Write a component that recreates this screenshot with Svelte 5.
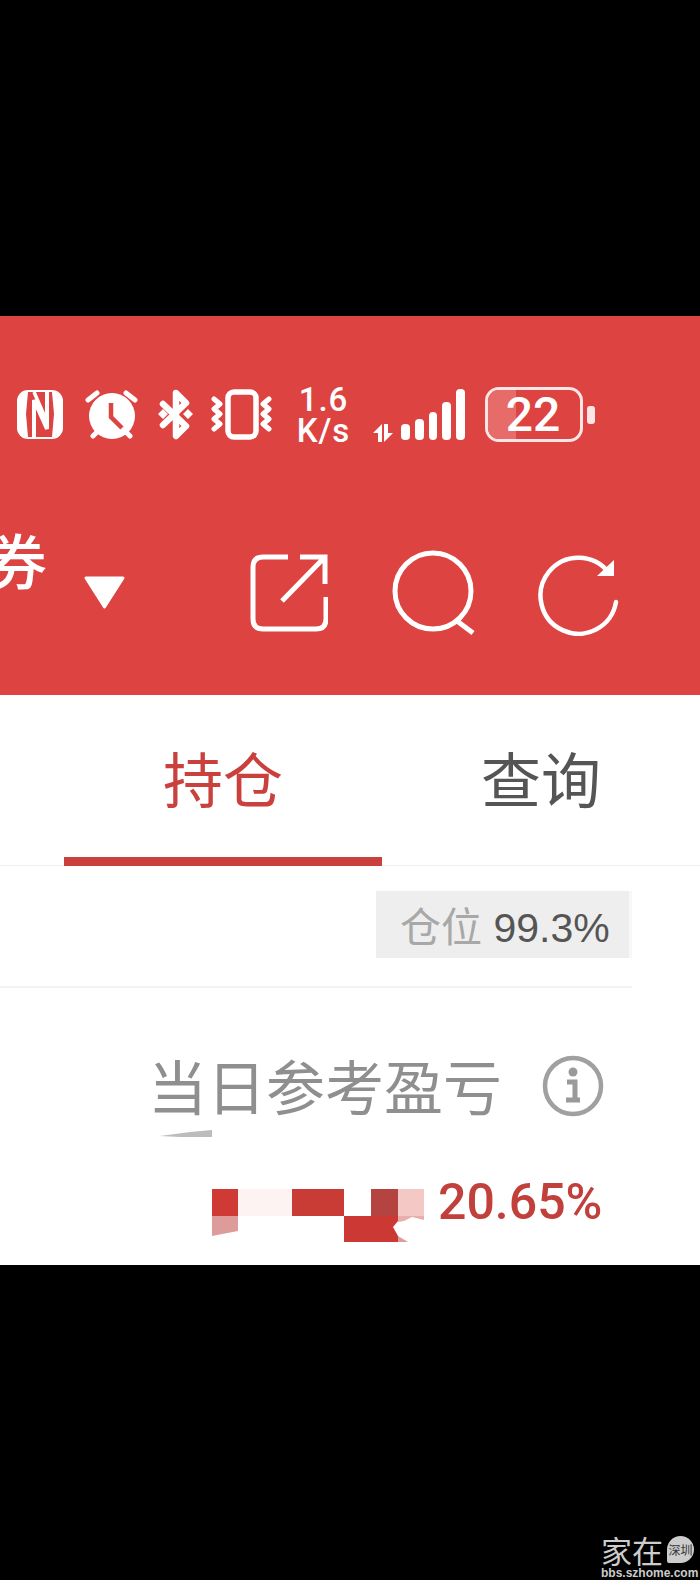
<script>
	const tabs = [
		{ label: '持仓', active: true },
		{ label: '查询', active: false }
	];
	const bars = [16, 21, 28, 38, 51];
	const patch = [
		{ x: 0, w: 26, fill: '#cf3a35' },
		{ x: 26, w: 54, fill: '#fdf3f2' },
		{ x: 80, w: 52, fill: '#c93c36' },
		{ x: 159, w: 27, fill: '#b54340' },
		{ x: 186, w: 26, fill: '#f3c8c5' }
	];
</script>

<div class="shot">
	<header>
		<div class="status">
			<svg class="nfc" width="46" height="49" viewBox="0 0 46 49">
				<rect width="46" height="49" rx="11" fill="#fff" />
				<path d="M11 2h24l2 22-2 23H11L9 24z" fill="#dd4341" />
				<path d="M17 47V10l13 29V2" fill="none" stroke="#fff" stroke-width="4" />
				<path d="M17 2l13 30" fill="none" stroke="#fff" stroke-width="3.500" />
			</svg>
			<svg class="alarm" width="53" height="51" viewBox="0 0 53 51">
				<path d="M3 11L12 4M50 11L41 4M8 47l5-5M45 47l-5-5" fill="none" stroke="#fff" stroke-width="5" stroke-linecap="round" />
				<circle cx="27" cy="27" r="23" fill="#fff" />
				<path d="M26 14v14l11 11" fill="none" stroke="#dd4341" stroke-width="4.500" />
			</svg>
			<svg class="bt" width="35" height="51" viewBox="0 0 35 51">
				<path d="M5 15l23 22-10 10V4l10 10L5 36" fill="none" stroke="#fff" stroke-width="6.500" stroke-linejoin="round" stroke-linecap="round" />
				<path d="M0 25l5-5 5 5-5 5zM25 25l5-5 5 5-5 5z" fill="#fff" />
			</svg>
			<svg class="vibrate" width="63" height="51" viewBox="0 0 63 51">
				<rect x="18" y="3" width="28" height="45" rx="6" fill="none" stroke="#fff" stroke-width="5.500" />
				<path d="M4 10l6 5-6 5 6 5-6 5 6 5-6 5M59 10l-6 5 6 5-6 5 6 5-6 5 6 5" fill="none" stroke="#fff" stroke-width="5" stroke-linejoin="round" stroke-linecap="round" />
			</svg>
			<div class="speed"><span>1.6</span><span>K/s</span></div>
			<svg class="arrows" width="20" height="18" viewBox="0 0 20 18">
				<path d="M9 0L0 9h5v9h4zM11 0h4v9h5l-9 9z" fill="#fff" />
			</svg>
			<div class="bars">
				{#each bars as h}
					<span style:height="{h}px"></span>
				{/each}
			</div>
			<div class="battery">
				<span class="charge"></span>
				<span class="level">22</span>
			</div>
			<span class="nub"></span>
		</div>

		<div class="toolbar">
			<span class="broker">券</span>
			<svg class="caret" width="43" height="34" viewBox="0 0 43 34">
				<path d="M3 2h37L21.500 31z" fill="#fff" stroke="#fff" stroke-width="3" stroke-linejoin="round" />
			</svg>
			<div class="actions">
				<svg class="share" width="78" height="78" viewBox="0 0 78 78">
					<path d="M38 3H13Q3 3 3 13v52q0 10 10 10h53q10 0 10-10V43" fill="none" stroke="#fff" stroke-width="5" />
					<path d="M32 47L73 5M50 3h25v27" fill="none" stroke="#fff" stroke-width="5" />
				</svg>
				<svg class="search" width="86" height="86" viewBox="0 0 86 86">
					<circle cx="42" cy="42" r="38" fill="none" stroke="#fff" stroke-width="5" />
					<path d="M66 72l16 12" fill="none" stroke="#fff" stroke-width="5" />
				</svg>
				<svg class="refresh" width="82" height="84" viewBox="0 0 82 84">
					<path d="M71 21A38 38 0 1 0 78 50" fill="none" stroke="#fff" stroke-width="4.500" stroke-linecap="round" />
					<path d="M76 8v16H59z" fill="#fff" />
				</svg>
			</div>
		</div>
	</header>

	<section class="panel">
		<nav class="tabs">
			{#each tabs as tab}
				<div class="tab" class:active={tab.active}>{tab.label}</div>
			{/each}
		</nav>

		<div class="position">
			<div class="chip"><span class="chip-label">仓位</span> <span class="chip-value">99.3%</span></div>
		</div>

		<div class="pnl">
			<div class="pnl-title">
				<span>当日参考盈亏</span>
				<svg width="62" height="62" viewBox="0 0 62 62">
					<circle cx="31" cy="31" r="28" fill="none" stroke="#a0a0a0" stroke-width="4.500" />
					<circle cx="31" cy="17" r="4.500" fill="#9a9a9a" />
					<path d="M25 27h8v16M24 45h14" fill="none" stroke="#9a9a9a" stroke-width="5" />
				</svg>
			</div>
			<svg class="dash" width="52" height="8" viewBox="0 0 52 8">
				<path d="M0 6L30 2 52 0V7H20z" fill="#bcbcbc" />
			</svg>
			<div class="pnl-value">
				<svg width="212" height="54" viewBox="0 0 212 54">
					{#each patch as b}
						<rect x={b.x} y="0" width={b.w} height="27" fill={b.fill} />
					{/each}
					<path d="M0 27H26V42L0 47z" fill="#dd9c99" />
					<path d="M186 27h26v4l-12-3-8 4-6 1z" fill="#e8aeab" />
					<path d="M132 27h54v5l-5 6 5 9v6H132z" fill="#cc3833" />
					<path d="M186 47l10 6h-10z" fill="#dd9c99" />
				</svg>
				<span class="percent">20.65%</span>
			</div>
		</div>
	</section>

	<footer>
		<div class="mark">
			<span class="mark-name">家在</span>
			<span class="mark-city">深圳</span>
		</div>
		<div class="mark-url">bbs.szhome.com</div>
	</footer>
</div>

<style>
	:global(body) {
		margin: 0;
		background: #000;
	}

	.shot {
		width: 700px;
		height: 1580px;
		padding-top: 316px;
		box-sizing: border-box;
		overflow: hidden;
		background: #000;
		font-family: 'Liberation Sans', 'Noto Sans CJK SC', sans-serif;
	}

	header {
		height: 379px;
		box-sizing: border-box;
		padding-top: 70px;
		overflow: hidden;
		background: #dd4341;
		color: #fff;
	}

	.status {
		display: flex;
		align-items: center;
		height: 57px;
		padding-left: 17px;
	}

	.alarm {
		margin-left: 22px;
	}

	.bt {
		margin-left: 20px;
	}

	.vibrate {
		margin-left: 17px;
	}

	.speed {
		display: flex;
		flex-direction: column;
		align-items: center;
		width: 53px;
		margin-left: 24px;
		font-family: 'Roboto', sans-serif;
		font-size: 33px;
		font-weight: 500;
		line-height: 31px;
		letter-spacing: 1px;
	}

	.arrows {
		margin: 36px 0 0 23px;
	}

	.bars {
		display: flex;
		align-items: flex-end;
		gap: 5px;
		width: 64px;
		height: 51px;
		margin-left: 8px;
	}

	.bars span {
		width: 9px;
		border-radius: 4px;
		background: #fff;
	}

	.battery {
		position: relative;
		display: flex;
		align-items: center;
		justify-content: center;
		width: 98px;
		height: 55px;
		box-sizing: border-box;
		margin-left: 20px;
		padding-right: 2px;
		border: 3.5px solid #fbe6e5;
		border-radius: 14px;
		overflow: hidden;
	}

	.charge {
		position: absolute;
		top: 0;
		bottom: 0;
		left: 0;
		width: 28px;
		background: #e66b69;
	}

	.level {
		position: relative;
		font-family: 'Roboto', sans-serif;
		font-size: 48px;
		font-weight: 500;
		line-height: 1;
	}

	.nub {
		width: 8px;
		height: 18px;
		margin-left: 4px;
		border-radius: 3px;
		background: #fbe6e5;
	}

	.toolbar {
		display: flex;
		height: 115px;
		margin-top: 77px;
		padding-right: 80px;
	}

	.broker {
		margin-left: -13px;
		font-family: 'Noto Sans CJK SC', sans-serif;
		font-size: 60px;
		font-weight: 500;
		line-height: 78px;
	}

	.caret {
		margin: 56px 0 0 36px;
	}

	.actions {
		display: flex;
		align-items: flex-start;
		margin-left: auto;
		padding-top: 29px;
	}

	.share {
		margin-top: 5px;
		margin-left: 2px;
	}

	.search {
		margin-left: 63px;
	}

	.refresh {
		margin: 3px 0 0 61px;
	}

	.panel {
		height: 570px;
		overflow: hidden;
		background: #fff;
	}

	.tabs {
		display: flex;
		height: 171px;
		box-sizing: border-box;
		padding-left: 64px;
		border-bottom: 1px solid #eee;
	}

	.tab {
		width: 319px;
		height: 171px;
		box-sizing: border-box;
		padding-top: 5px;
		font-family: 'Noto Sans CJK SC', sans-serif;
		font-size: 60px;
		line-height: 154px;
		text-align: center;
		color: #555;
	}

	.tab.active {
		border-bottom: 9px solid #c9403c;
		color: #c9403c;
	}

	.position {
		display: flex;
		justify-content: flex-end;
		width: 632px;
		margin-top: 25px;
		padding-bottom: 28px;
		border-bottom: 2px solid #f3f3f3;
	}

	.chip {
		width: 256px;
		height: 67px;
		box-sizing: border-box;
		padding-left: 24px;
		border-right: 3px solid #f8f8f8;
		background: #eee;
		font-size: 41px;
		line-height: 67px;
		white-space: nowrap;
	}

	.chip-label {
		font-family: 'Noto Sans CJK SC', sans-serif;
		color: #a8a8a8;
	}

	.chip-value {
		color: #555;
	}

	.pnl {
		padding-top: 64px;
	}

	.pnl-title {
		display: flex;
		align-items: center;
		height: 64px;
		padding-left: 148px;
		font-family: 'Noto Sans CJK SC', sans-serif;
		font-size: 59px;
		color: #8f8f8f;
	}

	.pnl-title svg {
		margin: 4px 0 0 40px;
	}

	.dash {
		display: block;
		margin: 14px 0 0 160px;
	}

	.pnl-value {
		display: flex;
		align-items: flex-start;
		margin: 51px 0 0 212px;
	}

	.percent {
		margin: -17px 0 0 14px;
		font-family: 'Roboto', sans-serif;
		font-size: 50px;
		font-weight: 500;
		line-height: 60px;
		color: #c2403c;
	}

	footer {
		padding: 268px 6px 0 601px;
		color: #ccc;
	}

	.mark {
		display: flex;
		align-items: center;
		gap: 2px;
		height: 33px;
	}

	.mark-name {
		font-family: 'Noto Sans CJK SC', sans-serif;
		font-size: 31px;
		line-height: 33px;
		white-space: nowrap;
	}

	.mark-city {
		width: 28px;
		height: 27px;
		margin-left: 2px;
		border-radius: 14px 14px 14px 2px;
		background: #ccc;
		font-family: 'Noto Sans CJK SC', sans-serif;
		font-size: 12px;
		line-height: 27px;
		text-align: center;
		white-space: nowrap;
		color: #333;
	}

	.mark-url {
		margin-top: 1px;
		font-size: 12px;
		font-weight: 700;
		line-height: 12px;
		white-space: nowrap;
	}
</style>
